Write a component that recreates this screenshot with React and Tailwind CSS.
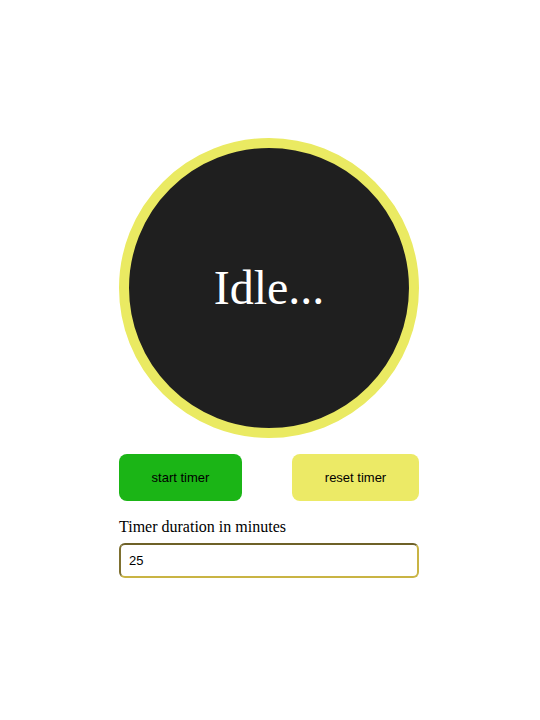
export default function App() {
  return (
    <div className="w-[540px] h-[720px] bg-white">
      <div className="w-[300px] ml-[119px] pt-[138px] flex flex-col">
        <div className="w-[300px] h-[300px] rounded-full border-[10px] border-[#eaea62] bg-[#1f1f1f] flex items-center justify-center">
          <span className="text-white text-[48px] leading-none font-['Liberation_Serif',serif]">Idle...</span>
        </div>
        <div className="mt-4 flex justify-between">
          <button className="w-[123px] h-[47px] rounded-lg bg-[#1bb516] text-black text-[13px] font-['Liberation_Sans',Arial,sans-serif]">start timer</button>
          <button className="w-[127px] h-[47px] rounded-lg bg-[#ecea66] text-black text-[13px] font-['Liberation_Sans',Arial,sans-serif]">reset timer</button>
        </div>
        <label className="mt-[17px] text-[16px] leading-[18px] text-black font-['Liberation_Serif',serif]">Timer duration in minutes</label>
        <input
          defaultValue="25"
          className="mt-[7px] w-[300px] h-[35px] rounded-md border-2 border-t-[#6e6128] border-l-[#7e7030] border-b-[#c9b444] border-r-[#c9b444] px-[8px] text-[13px] text-black font-['Liberation_Sans',Arial,sans-serif] outline-none"
        />
      </div>
    </div>
  );
}
